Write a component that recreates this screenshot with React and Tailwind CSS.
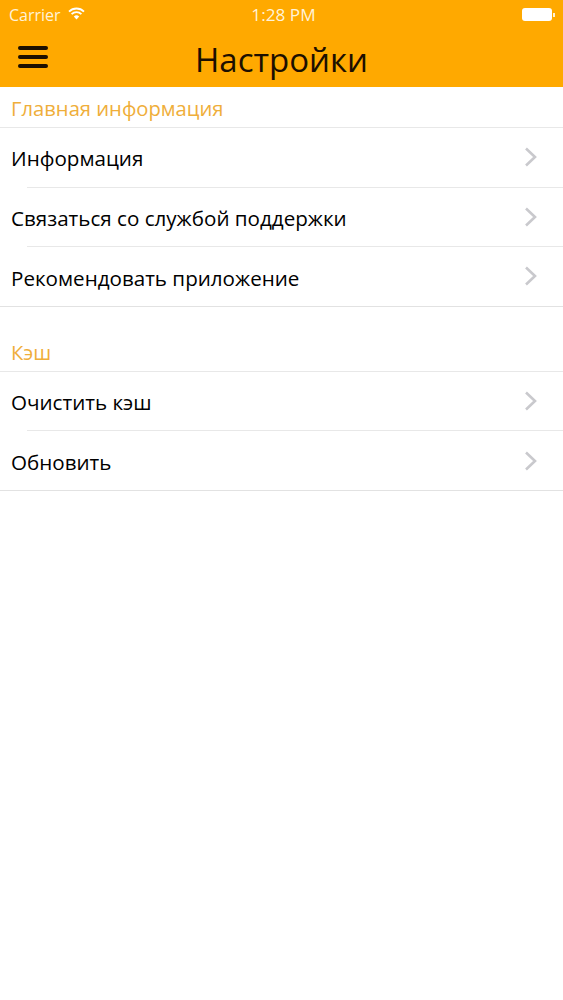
const sections = [
  { title: "Главная информация", items: ["Информация", "Связаться со службой поддержки", "Рекомендовать приложение"] },
  { title: "Кэш", items: ["Очистить кэш", "Обновить"] },
];

function Chevron() {
  return (
    <svg width="13" height="20" viewBox="0 0 13 20" fill="none" className="mr-[26px] mb-[3px] shrink-0">
      <path d="M2 1.5l9 8.5-9 8.5" stroke="#c9c9cd" strokeWidth="2.6" />
    </svg>
  );
}

function Row({ label, last }) {
  return (
    <div className="h-[59.6px] relative flex items-center justify-between pl-[11px] pt-[2px]">
      <span className="text-[20.6px] text-black">{label}</span>
      <Chevron />
      <div className={last ? "absolute bottom-0 left-0 right-0 h-px bg-[#e2e2e2]" : "absolute bottom-0 left-[27px] right-0 h-px bg-[#e8e8e8]"} />
    </div>
  );
}

function StatusBar() {
  return (
    <div className="h-[29px] flex items-center justify-between pl-[9px] pr-[8px] text-[#fff3d9]">
      <div className="flex items-center gap-[7px] w-[120px] text-[16px]">
        <span>Carrier</span>
        <svg width="17" height="13" viewBox="0 0 17 13" fill="none" className="mb-[3px]">
          <path d="M1 4.6a10.6 10.6 0 0 1 15 0" stroke="#fff" strokeWidth="1.8" />
          <path d="M3.6 7.2a6.9 6.9 0 0 1 9.8 0" stroke="#fff" strokeWidth="1.8" />
          <path d="M8.5 12.5 5.8 9.6a3.9 3.9 0 0 1 5.4 0z" fill="#fff" />
        </svg>
      </div>
      <span className="text-[17.2px] mr-[-3px]">1:28 PM</span>
      <div className="flex items-center justify-end w-[120px]">
        <div className="w-[30px] h-[13px] rounded-[3px] bg-white" />
        <div className="w-[2px] h-[4px] bg-[#fff3d9] ml-[1px]" />
      </div>
    </div>
  );
}

export default function App() {
  return (
    <div className="w-[563px] min-h-[1000px] bg-white font-['Open_Sans',sans-serif]">
      <div className="h-[87px] bg-[#ffa900]">
        <StatusBar />
        <div className="flex items-center h-[58px] relative">
          <div className="absolute left-[18px] top-[17px] w-[30px] flex flex-col gap-[5px]">
            <div className="h-[4px] rounded-full bg-[#1c0f00]" />
            <div className="h-[4px] rounded-full bg-[#1c0f00]" />
            <div className="h-[4px] rounded-full bg-[#1c0f00]" />
          </div>
          <h1 className="w-full text-center text-[33px] text-[#1c0f00] pt-[3px]">Настройки</h1>
        </div>
      </div>
      {sections.map((s, i) => (
        <div key={s.title} className={i > 0 ? "mt-[24px]" : ""}>
          <div className="h-[41px] flex items-center pl-[11px] pt-[3px] text-[20.2px] text-[#efae3a] border-b border-[#e8e8e8]">
            {s.title}
          </div>
          {s.items.map((item, j) => (
            <Row key={item} label={item} last={j === s.items.length - 1} />
          ))}
        </div>
      ))}
    </div>
  );
}
